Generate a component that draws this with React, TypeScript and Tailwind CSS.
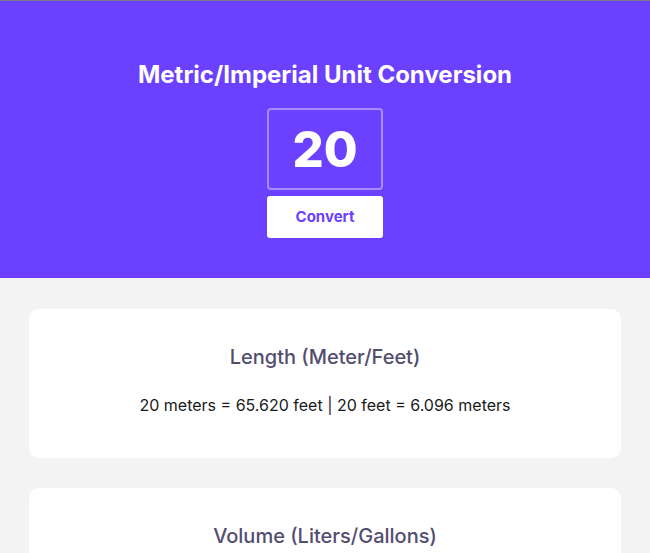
import React from "react";

export default function App() {
  return (
    <div className="min-h-[553px] bg-[#f3f3f3]" style={{ fontFamily: "Inter, 'Noto Sans', sans-serif" }}>
      <div className="border-t border-[#7a7a8a] bg-[#6b41ff] flex flex-col items-center pt-[58px] pb-[40px]">
        <h1 className="text-white text-[24px] leading-[32px] font-bold">Metric/Imperial Unit Conversion</h1>
        <div className="mt-[17px] w-[116px] h-[82px] border-2 border-[#a58cff] rounded-[4px] flex items-center justify-center">
          <span className="text-white text-[49px] font-extrabold leading-none">20</span>
        </div>
        <button className="mt-[6px] w-[116px] h-[42px] bg-white rounded-[3px] text-[#6b41ff] text-[15px] font-bold">Convert</button>
      </div>
      <div className="px-[29px] pt-[31px] flex flex-col gap-[30px]">
        <div className="bg-white rounded-[10px] pt-[34px] pb-[41px] flex flex-col items-center">
          <h2 className="text-[20px] leading-[28px] font-medium text-[#534d70]">Length (Meter/Feet)</h2>
          <p className="mt-[22px] text-[16px] leading-[24px] text-[#1a1a1a]">20 meters = 65.620 feet | 20 feet = 6.096 meters</p>
        </div>
        <div className="bg-white rounded-[10px] pt-[34px] pb-[41px] flex flex-col items-center">
          <h2 className="text-[20px] leading-[28px] font-medium text-[#534d70]">Volume (Liters/Gallons)</h2>
          <p className="mt-[22px] text-[16px] leading-[24px] text-[#1a1a1a]">20 liters = 5.284 gallons | 20 gallons = 75.700 liters</p>
        </div>
      </div>
    </div>
  );
}
